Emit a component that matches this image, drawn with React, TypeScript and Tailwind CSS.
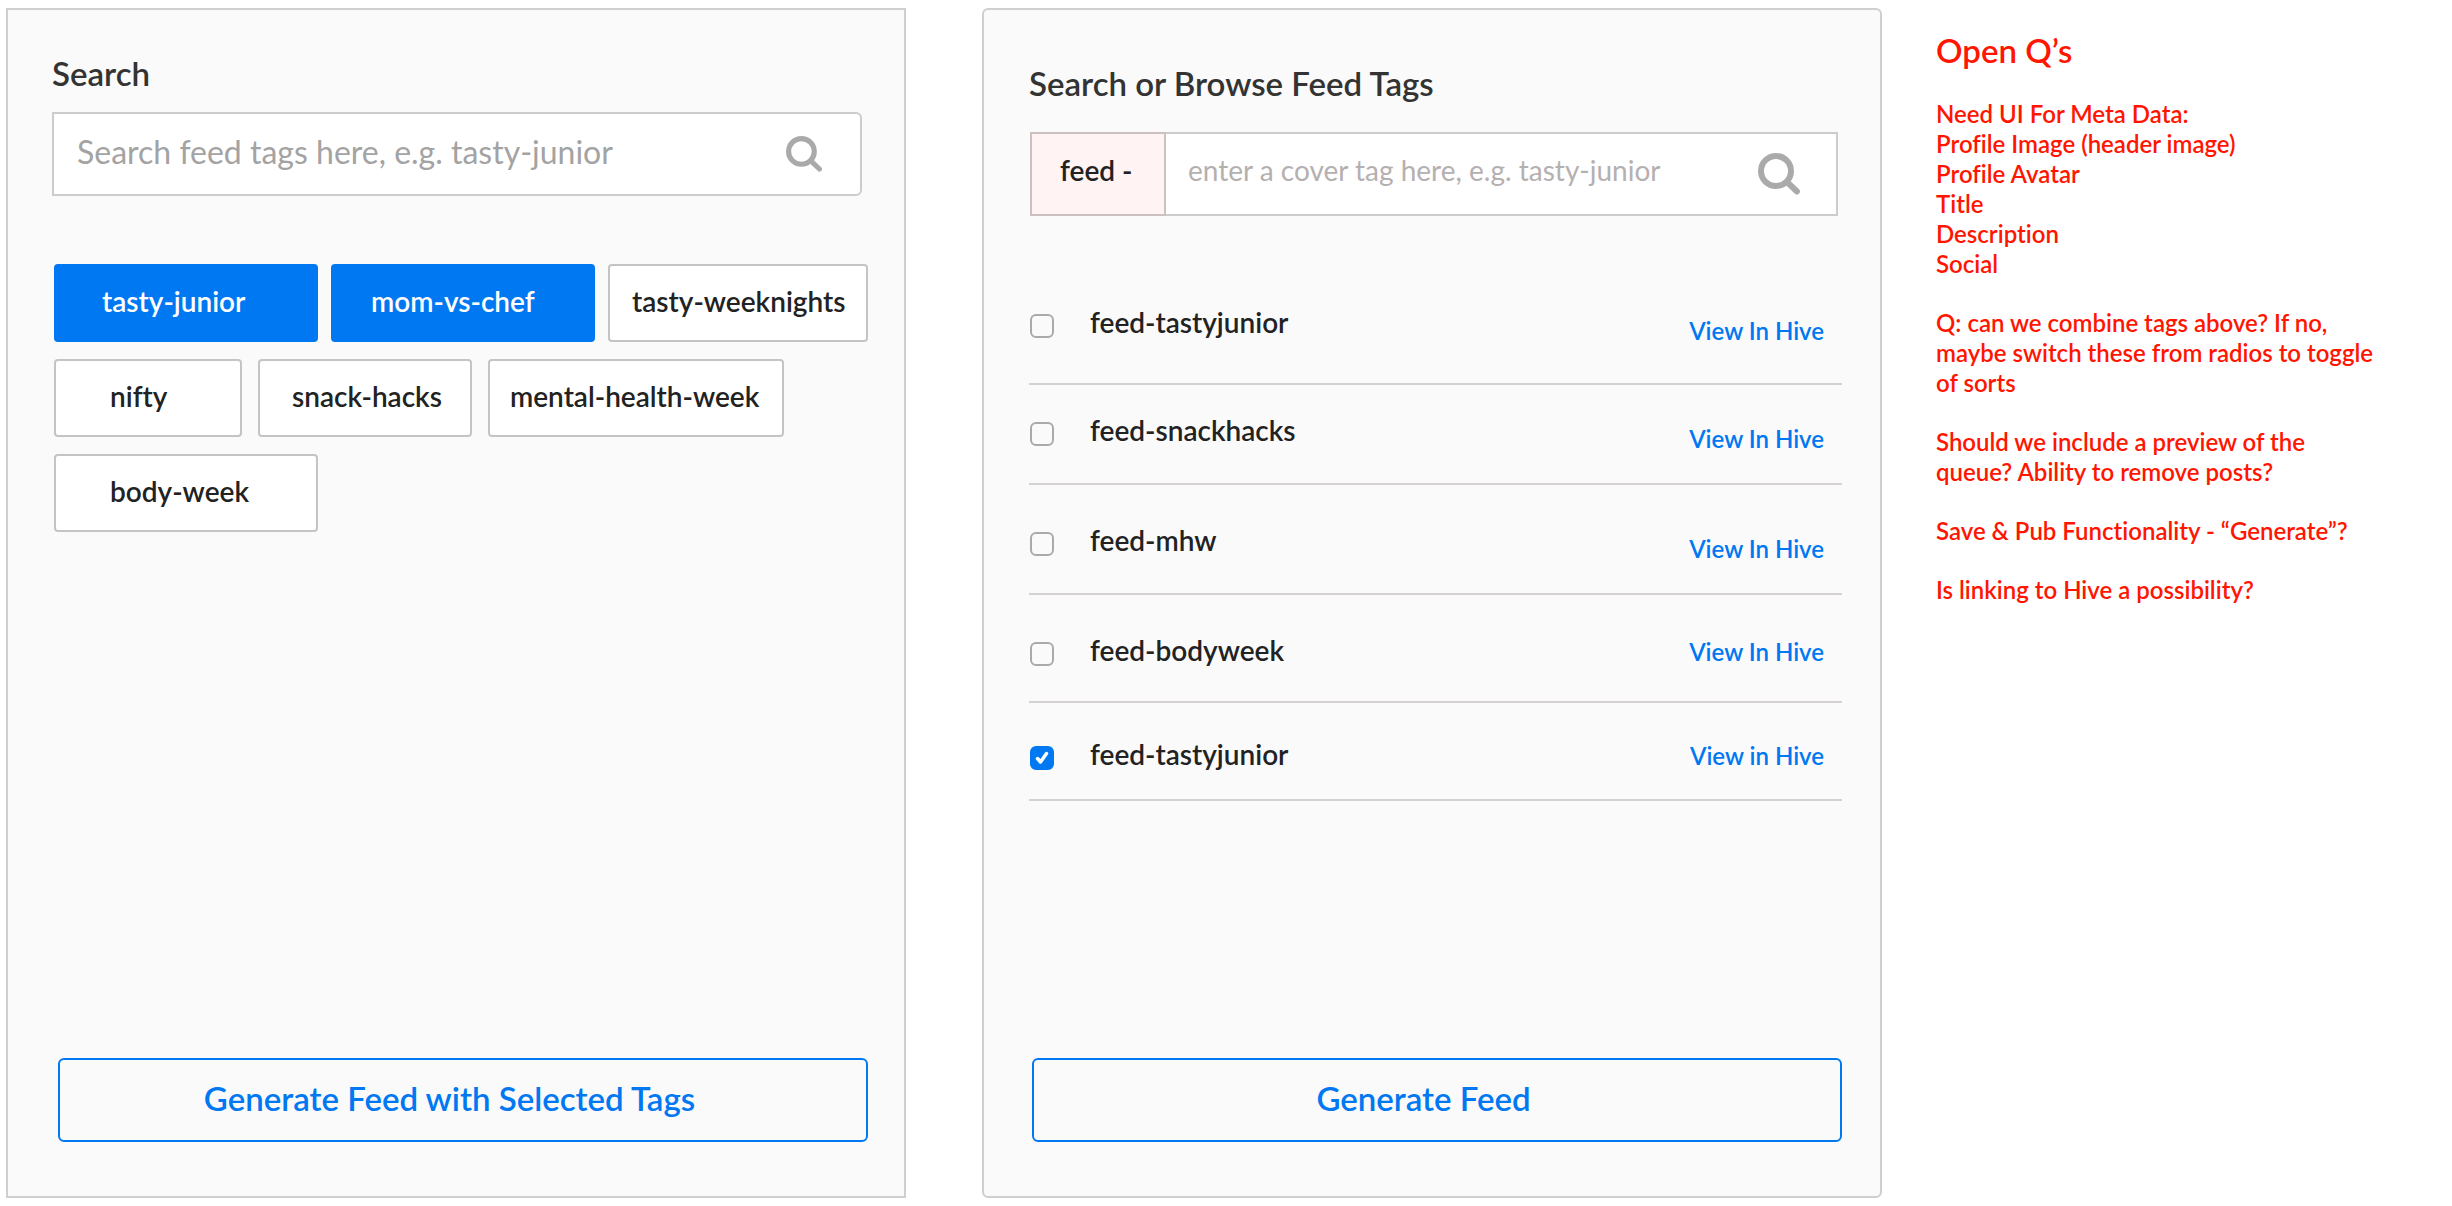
import React, { useState } from "react";

type Tag = { name: string; box: string; selected?: boolean };

const tagRows: { gap: string; tags: Tag[] }[] = [
  {
    gap: "gap-[13px]",
    tags: [
      { name: "tasty-junior", box: "w-[264px] pl-[46px]", selected: true },
      { name: "mom-vs-chef", box: "w-[264px] pl-[38px]", selected: true },
      { name: "tasty-weeknights", box: "w-[260px] pl-[22px]" },
    ],
  },
  {
    gap: "gap-4",
    tags: [
      { name: "nifty", box: "w-[188px] pl-[54px]" },
      { name: "snack-hacks", box: "w-[214px] pl-8" },
      { name: "mental-health-week", box: "w-[296px] pl-[20px]" },
    ],
  },
  { gap: "gap-4", tags: [{ name: "body-week", box: "w-[264px] pl-[54px]" }] },
];

type Feed = { id: string; name: string; link: string; row: string; linkDrop: string; checked?: boolean };

const feeds: Feed[] = [
  { id: "feed-1", name: "feed-tastyjunior", link: "View In Hive", row: "pt-7 pb-[38px]", linkDrop: "mt-[13px]" },
  { id: "feed-2", name: "feed-snackhacks", link: "View In Hive", row: "pt-[27px] pb-[30px]", linkDrop: "mt-[13px]" },
  { id: "feed-3", name: "feed-mhw", link: "View In Hive", row: "pt-[37px] pb-[30px]", linkDrop: "mt-[13px]" },
  { id: "feed-4", name: "feed-bodyweek", link: "View In Hive", row: "pt-[37px] pb-[33px]", linkDrop: "mt-[6px]" },
  { id: "feed-5", name: "feed-tastyjunior", link: "View in Hive", row: "pt-[33px] pb-[27px]", linkDrop: "mt-[6px]", checked: true },
];

const notes: string[][] = [
  [
    "Need UI For Meta Data:",
    "Profile Image (header image)",
    "Profile Avatar",
    "Title",
    "Description",
    "Social",
  ],
  ["Q: can we combine tags above? If no, maybe switch these from radios to toggle of sorts"],
  ["Should we include a preview of the queue? Ability to remove posts?"],
  ["Save & Pub Functionality - “Generate”?"],
  ["Is linking to Hive a possibility?"],
];

function SearchIcon({ className }: { className: string }) {
  return (
    <svg viewBox="0 0 42 42" fill="none" stroke="#aaaaaa" strokeWidth="6" aria-hidden="true" className={className}>
      <circle cx="18" cy="18" r="15" />
      <path d="M29 29 39 38.5" strokeLinecap="round" />
    </svg>
  );
}

function TagButton({ tag }: { tag: Tag }) {
  const [on, setOn] = useState(!!tag.selected);
  const tone = on ? "border-[#0078f2] bg-[#0078f2] text-white" : "border-[#c4c4c4] bg-white text-[#222222]";
  return (
    <button
      type="button"
      aria-pressed={on}
      onClick={() => setOn(!on)}
      className={`h-[78px] rounded border-2 pb-1 text-left text-[28px] leading-9 font-semibold whitespace-nowrap ${tone} ${tag.box}`}
    >
      {tag.name}
    </button>
  );
}

function FeedRow({ feed }: { feed: Feed }) {
  return (
    <li className={`flex items-start justify-between border-b-2 border-[#d6d2d2] pr-[18px] pl-px ${feed.row}`}>
      <label htmlFor={feed.id} className="flex items-start gap-9 text-[28px] leading-9 font-semibold text-[#222222]">
        <span className="relative mt-[10px] block size-6">
          <input
            id={feed.id}
            type="checkbox"
            defaultChecked={feed.checked}
            className="peer block size-6 appearance-none rounded-[6px] border-2 border-[#aaaaaa] bg-[#fafafa] checked:border-[#0078f2] checked:bg-[#0078f2]"
          />
          <svg
            viewBox="0 0 24 24"
            fill="none"
            stroke="white"
            strokeWidth="3.5"
            strokeLinecap="round"
            strokeLinejoin="round"
            aria-hidden="true"
            className="pointer-events-none absolute inset-0 hidden size-6 peer-checked:block"
          >
            <path d="M7.5 12.5 10.5 16 16.5 7.5" />
          </svg>
        </span>
        {feed.name}
      </label>
      <a href="#hive" className={`text-2xl leading-7 font-semibold text-[#0078f2] ${feed.linkDrop}`}>
        {feed.link}
      </a>
    </li>
  );
}

export default function App() {
  return (
    <main className="grid min-h-screen grid-cols-[minmax(0,1876fr)_minmax(0,570fr)] bg-white py-2 pl-[6px] font-['Lato','Open_Sans',sans-serif] [font-variant-ligatures:none]">
      <div className="grid grid-cols-2 gap-19">
        <section className="flex flex-col border-2 border-[#cfcfcf] bg-[#fafafa] pt-[43px] pr-9 pb-[54px] pl-11">
          <label htmlFor="tag-search" className="text-[33px] leading-10 font-semibold text-[#333333]">
            Search
          </label>
          <form
            onSubmit={(e) => e.preventDefault()}
            className="mt-[19px] mr-[6px] flex h-[84px] items-center rounded-r-md border-2 border-[#cccccc] bg-white"
          >
            <input
              id="tag-search"
              type="text"
              placeholder="Search feed tags here, e.g. tasty-junior"
              className="h-full min-w-0 flex-1 pb-[6px] pl-[23px] text-[32px] leading-10 text-[#333333] outline-none placeholder:text-[#a3a3a3]"
            />
            <button type="submit" aria-label="Search tags" className="mr-[38px]">
              <SearchIcon className="size-9" />
            </button>
          </form>
          <div className="mt-17 ml-[2px] flex flex-col gap-[17px]">
            {tagRows.map((row, i) => (
              <div key={i} className={`flex ${row.gap}`}>
                {row.tags.map((tag) => (
                  <TagButton key={tag.name} tag={tag} />
                ))}
              </div>
            ))}
          </div>
          <button
            type="button"
            className="mt-auto ml-[6px] h-[84px] rounded-md border-2 border-[#0078f2] pr-[27px] pb-1 text-[33px] leading-10 font-semibold text-[#0078f2]"
          >
            Generate Feed with Selected Tags
          </button>
        </section>

        <section className="flex flex-col rounded-md border-2 border-[#cfcfcf] bg-[#fafafa] pt-[53px] pr-[38px] pb-[54px] pl-[45px]">
          <label htmlFor="cover-search" className="text-[33px] leading-10 font-semibold text-[#333333]">
            Search or Browse Feed Tags
          </label>
          <form
            onSubmit={(e) => e.preventDefault()}
            className="mt-[29px] mr-1 ml-px flex h-[84px] items-stretch bg-white"
          >
            <span className="flex w-[136px] items-center border-2 border-[#ccc0c0] bg-[#fff3f3] pb-2 pl-7 text-[28px] leading-9 font-semibold text-[#222222]">
              feed -
            </span>
            <div className="flex min-w-0 flex-1 items-center border-2 border-l-0 border-[#cccccc]">
              <input
                id="cover-search"
                type="text"
                placeholder="enter a cover tag here, e.g. tasty-junior"
                className="h-full min-w-0 flex-1 pb-2 pl-[22px] text-[28px] leading-9 text-[#333333] outline-none placeholder:text-[#b5b0b0]"
              />
              <button type="submit" aria-label="Search feeds" className="mr-9">
                <SearchIcon className="size-[42px]" />
              </button>
            </div>
          </form>
          <ul className="mt-[60px]">
            {feeds.map((feed) => (
              <FeedRow key={feed.id} feed={feed} />
            ))}
          </ul>
          <button
            type="button"
            className="mt-auto ml-[3px] h-[84px] rounded-md border-2 border-[#0078f2] pr-[27px] pb-1 text-[33px] leading-10 font-semibold text-[#0078f2]"
          >
            Generate Feed
          </button>
        </section>
      </div>

      <aside className="pt-[22px] pr-[65px] pl-[54px] font-semibold text-[#ff1500]">
        <h2 className="text-[33px] leading-10">Open Q’s</h2>
        <div className="mt-[29px] flex flex-col gap-[29px] text-2xl leading-[30px]">
          {notes.map((lines, i) => (
            <div key={i}>
              {lines.map((line) => (
                <p key={line}>{line}</p>
              ))}
            </div>
          ))}
        </div>
      </aside>
    </main>
  );
}
